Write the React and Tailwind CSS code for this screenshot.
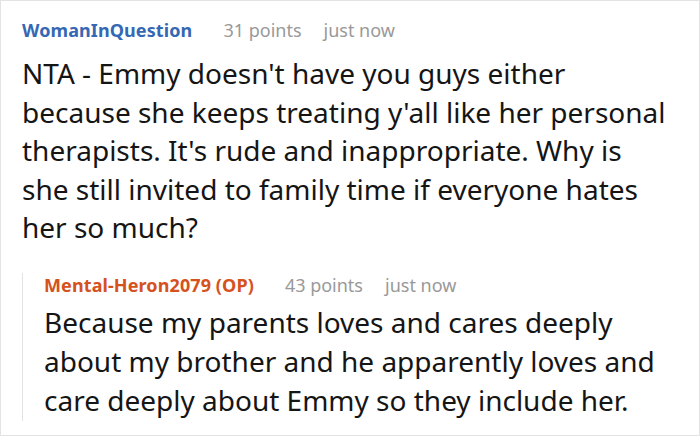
import React from 'react';

const comment = {
  user: 'WomanInQuestion',
  points: '31 points',
  time: 'just now',
  body: "NTA - Emmy doesn't have you guys either because she keeps treating y'all like her personal therapists. It's rude and inappropriate. Why is she still invited to family time if everyone hates her so much?",
};

const reply = {
  user: 'Mental-Heron2079 (OP)',
  points: '43 points',
  time: 'just now',
  body: 'Because my parents loves and cares deeply about my brother and he apparently loves and care deeply about Emmy so they include her.',
};

function Meta({ user, points, time, op }) {
  return (
    <div className="flex items-baseline text-[18px] leading-[24px]">
      <span className={`font-bold tracking-[0.1px] ${op ? 'text-[#d5521d]' : 'text-[#3568b4]'}`}>{user}</span>
      <span className="ml-[31px] text-[#999999]">{points}</span>
      <span className="ml-[22px] text-[#999999]">{time}</span>
    </div>
  );
}

export default function App() {
  return (
    <div
      className="w-[700px] h-[436px] bg-white border border-[#e3e3e3] overflow-hidden text-[#151515]"
      style={{ fontFamily: '"Noto Sans", sans-serif' }}
    >
      <div className="pl-[21px] pt-[17px] w-[667px]">
        <Meta {...comment} />
        <p className="mt-[12px] text-[28px] leading-[38.5px]">{comment.body}</p>
        <div className="mt-[26px] border-l border-[#e3e3e3] pl-[21px] pb-[1px]">
          <Meta {...reply} op />
          <p className="mt-[6px] text-[28px] leading-[39px]">{reply.body}</p>
        </div>
      </div>
    </div>
  );
}
